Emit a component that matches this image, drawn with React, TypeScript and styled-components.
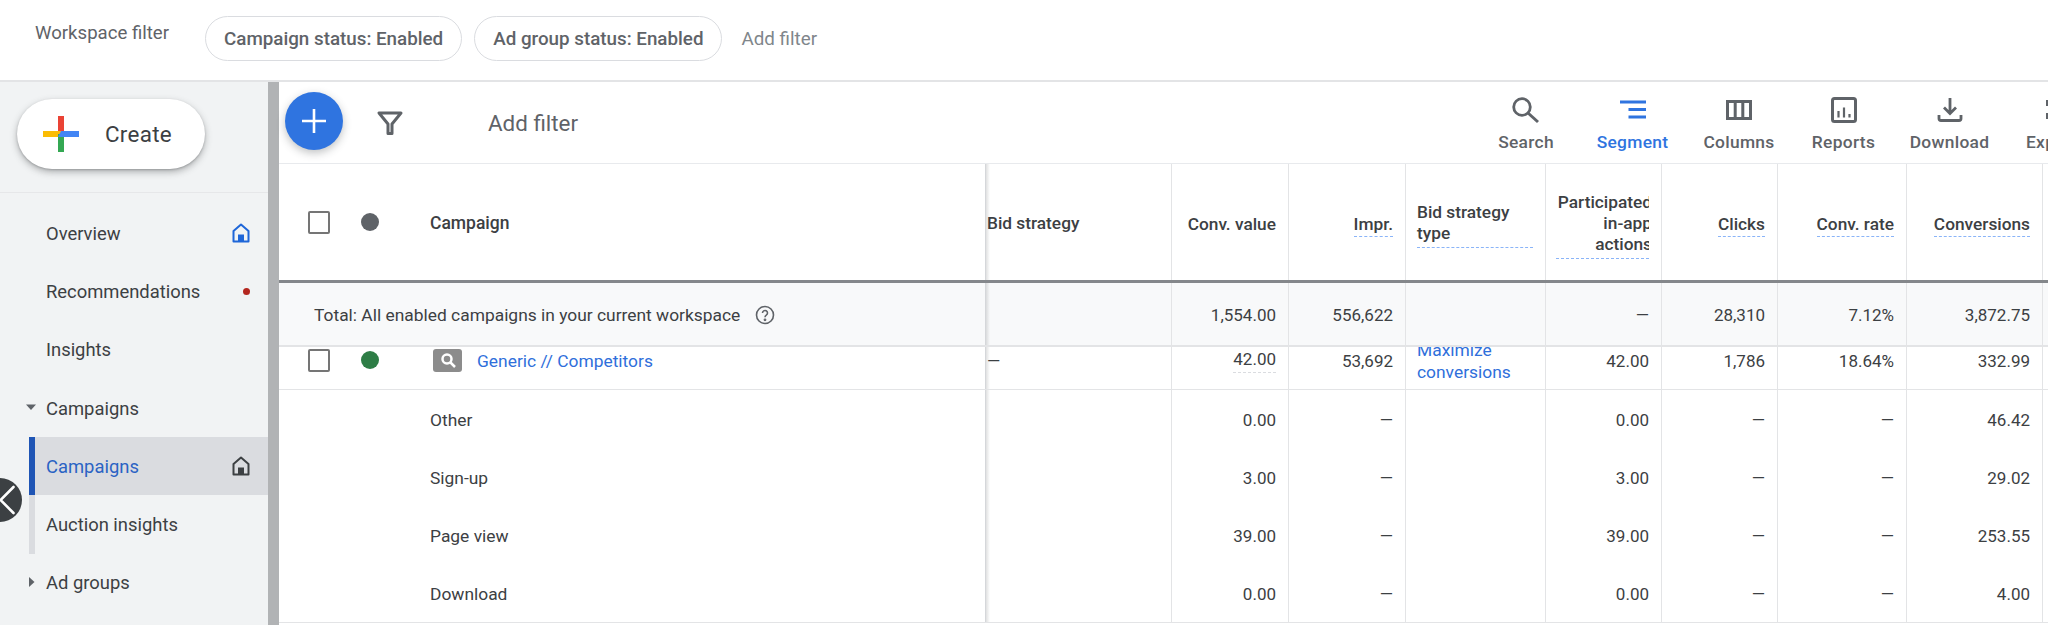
import * as React from 'react';
import styled, { createGlobalStyle } from 'styled-components';
import { ChevronLeft } from 'lucide-react';

const GlobalStyle = createGlobalStyle`
  html, body {
    margin: 0;
    padding: 0;
    background: #fff;
    overflow: hidden;
  }
  * {
    box-sizing: border-box;
  }
  body {
    font-family: Roboto, "Liberation Sans", sans-serif;
    color: #3c4043;
  }
`;

const COLUMNS = '707px 186px 117px 117px 140px 116px 116px 129px 136px 1fr';

const Page = styled.div`
  width: 2048px;
  height: 625px;
  overflow: hidden;
  position: relative;
  display: flex;
  flex-direction: column;
`;

const TopBar = styled.div`
  flex: 0 0 82px;
  display: flex;
  align-items: flex-start;
  padding: 16px 0 0 35px;
  border-bottom: 2px solid #e3e4e6;
`;

const WorkspaceLabel = styled.div`
  width: 170px;
  font-size: 18.6px;
  line-height: 20px;
  margin-top: 7px;
  color: #5f6368;
  white-space: nowrap;
`;

const Chip = styled.div`
  height: 45px;
  padding: 0 18px;
  margin-right: 12px;
  display: flex;
  align-items: center;
  border: 1px solid #dadce0;
  border-radius: 23px;
  font-size: 18.8px;
  font-weight: 500;
  color: #5f6368;
  white-space: nowrap;
`;

const AddFilterLink = styled.div`
  height: 45px;
  margin-left: 7px;
  display: flex;
  align-items: center;
  font-size: 18.8px;
  color: #80868b;
`;

const Body = styled.div`
  flex: 1;
  display: flex;
  min-height: 0;
`;

const Sidebar = styled.div`
  flex: 0 0 279px;
  background: #f1f3f4;
  border-right: 11px solid #b1b3b5;
  display: flex;
  flex-direction: column;
`;

const CreateArea = styled.div`
  flex: 0 0 111px;
  padding: 17px 0 0 17px;
  border-bottom: 1px solid #e6e7e9;
`;

const CreateButton = styled.div`
  width: 188px;
  height: 70px;
  border-radius: 35px;
  background: #fff;
  box-shadow: 0 3px 7px rgba(60, 64, 67, 0.38), 0 1px 2px rgba(60, 64, 67, 0.25);
  display: flex;
  align-items: center;
  padding-left: 26px;
  gap: 26px;
  font-size: 22.4px;
  letter-spacing: 0.3px;
  color: #3c4043;
`;

const NavList = styled.div`
  padding-top: 11px;
  display: flex;
  flex-direction: column;
`;

interface NavItemProps {
  $active?: boolean;
  $track?: boolean;
}

const NavItem = styled.div<NavItemProps>`
  height: 58.3px;
  display: flex;
  align-items: center;
  font-size: 18.4px;
  margin-left: ${p => (p.$active || p.$track ? '29px' : '0')};
  padding-left: ${p => (p.$active || p.$track ? '11px' : '46px')};
  padding-right: 18px;
  color: ${p => (p.$active ? '#2a63c4' : '#3c4043')};
  background: ${p => (p.$active ? '#dadce0' : 'transparent')};
  border-left: ${p => (p.$active ? '6px solid #1f55b5' : p.$track ? '6px solid #dadce0' : '0')};
  position: relative;
`;

const NavArrow = styled.svg`
  position: absolute;
  left: 26px;
  top: 50%;
  margin-top: -6px;
  width: 10px;
  height: 10px;
  fill: #5f6368;
`;

const NavEnd = styled.div`
  margin-left: auto;
  display: flex;
  align-items: center;
`;

const RedDot = styled.div`
  width: 7px;
  height: 7px;
  border-radius: 50%;
  background: #b3261e;
`;

const CollapseHandle = styled.div`
  position: absolute;
  left: -22px;
  top: 478px;
  width: 44px;
  height: 44px;
  border-radius: 50%;
  background: #3c4043;
  color: #fff;
  display: flex;
  align-items: center;
  padding-left: 3px;
  svg {
    flex: none;
  }
`;

const Main = styled.div`
  flex: 1;
  min-width: 0;
  display: flex;
  flex-direction: column;
`;

const Toolbar = styled.div`
  flex: 0 0 82px;
  display: flex;
  align-items: flex-start;
  border-bottom: 1px solid #e8eaed;
  position: relative;
`;

const Fab = styled.div`
  flex: 0 0 58px;
  height: 58px;
  margin: 10px 0 0 6px;
  border-radius: 50%;
  background: #2f74e0;
  box-shadow: 0 3px 9px rgba(60, 64, 67, 0.32);
  display: flex;
  align-items: center;
  justify-content: center;
`;

const FilterGlyph = styled.div`
  margin: 29px 0 0 33px;
  width: 28px;
  height: 28px;
`;

const ToolbarFilterText = styled.div`
  margin: 28px 0 0 84px;
  font-size: 22.4px;
  line-height: 26px;
  color: #5f6368;
`;

const ToolGroup = styled.div`
  margin-left: auto;
  display: flex;
  height: 100%;
`;

const Tool = styled.div<{ $active?: boolean; $width: number }>`
  width: ${p => p.$width}px;
  display: flex;
  flex-direction: column;
  align-items: center;
  padding-top: 13px;
  font-size: 17.4px;
  font-weight: 500;
  white-space: nowrap;
  color: ${p => (p.$active ? '#2f74e0' : '#5f6368')};
`;

const ExportTool = styled(Tool)`
  align-items: flex-start;
  padding-left: 22px;
`;

const ToolLabel = styled.div`
  margin-top: 7px;
  line-height: 20px;
  letter-spacing: 0.3px;
`;

const GridRow = styled.div<{ $height: number; $bg?: string; $bottom?: string }>`
  display: grid;
  grid-template-columns: ${COLUMNS};
  height: ${p => p.$height}px;
  background: ${p => p.$bg ?? 'transparent'};
  border-bottom: ${p => p.$bottom ?? '1px solid #e8eaed'};
`;

const Cell = styled.div<{ $left?: boolean }>`
  min-width: 0;
  display: flex;
  align-items: center;
  justify-content: ${p => (p.$left ? 'flex-start' : 'flex-end')};
  padding: ${p => (p.$left ? '2px 11px 0' : '2px 12px 0 0')};
  border-right: 1px solid #e3e4e6;
  font-size: 17px;
  color: #3c4043;
  overflow: hidden;
`;

const FrozenCell = styled(Cell)`
  justify-content: flex-start;
  padding: 2px 0 0;
  position: relative;
  z-index: 1;
  overflow: visible;
  border-right: 1px solid #d5d7da;
  &::after {
    content: '';
    position: absolute;
    top: 0;
    bottom: 0;
    right: -5px;
    width: 4px;
    background: linear-gradient(to right, rgba(60, 64, 67, 0.16), rgba(60, 64, 67, 0));
  }
`;

const StrategyCell = styled(Cell)`
  justify-content: flex-start;
  padding: 2px 0 0 1px;
`;

const HeaderCell = styled(Cell)`
  padding-top: 4px;
`;

const HeaderLabel = styled.div<{ $hint?: boolean; $left?: boolean }>`
  font-size: 17.3px;
  line-height: 21px;
  font-weight: 500;
  text-align: ${p => (p.$left ? 'left' : 'right')};
  color: #3c4043;
  white-space: nowrap;
  padding-bottom: 1px;
  margin-top: 2px;
  border-bottom: ${p => (p.$hint ? '1px dashed #8ab4f8' : '1px solid transparent')};
`;

const BidTypeLabel = styled(HeaderLabel)`
  width: 116px;
  padding-bottom: 3px;
`;

const ClippedLabel = styled(HeaderLabel)`
  width: 93px;
  padding-bottom: 3px;
  overflow: hidden;
  display: flex;
  flex-direction: column;
  align-items: flex-end;
  span {
    margin-right: -3px;
  }
`;

const Check = styled.div`
  flex: 0 0 22px;
  height: 23px;
  margin: -2px 0 0 29px;
  border: 2.5px solid #757575;
  border-radius: 2px;
  background: #fff;
`;

const StatusDot = styled.div<{ $color: string }>`
  flex: 0 0 18px;
  height: 18px;
  margin: -2px 0 0 31px;
  border-radius: 50%;
  background: ${p => p.$color};
`;

const CampaignHeading = styled.div`
  margin-left: 51px;
  font-size: 17.5px;
  font-weight: 500;
`;

const TotalText = styled.div`
  margin-left: 35px;
  display: flex;
  align-items: center;
  gap: 15px;
  font-size: 17.4px;
`;

const CampaignBadge = styled.div`
  flex: 0 0 29px;
  height: 23px;
  margin: -2px 0 0 54px;
  border-radius: 3px;
  background: #8c8c8c;
  display: flex;
  align-items: center;
  justify-content: center;
`;

const CampaignLink = styled.div`
  margin-left: 15px;
  color: #2f6fdb;
  font-size: 17.4px;
`;

const SegmentName = styled.div`
  margin-left: 151px;
  font-size: 17.4px;
`;

const HintValue = styled.span`
  border-bottom: 1px dashed #dadce0;
  padding-bottom: 3px;
`;

const ClippedRow = styled.div`
  height: 43px;
  overflow: hidden;
  border-bottom: 1px solid #e3e4e6;
`;

const RowShift = styled.div`
  margin-top: -16px;
`;

const BidLink = styled.div`
  color: #2f6fdb;
  font-size: 17.4px;
  line-height: 22px;
`;

const HomeIcon = ({ color, fill }: { color: string; fill: string }) => (
  <svg width="18" height="20" viewBox="0 0 18 20">
    <path d="M1.5 18.5V8L9 1.5 16.5 8v10.5z" fill={fill} stroke={color} strokeWidth="2" strokeLinejoin="round" />
    <rect x="6" y="11.5" width="6" height="7" fill={color} />
  </svg>
);

const GooglePlus = () => (
  <svg width="36" height="36" viewBox="0 0 36 36">
    <rect x="15" y="0" width="6" height="18" fill="#ea4335" />
    <rect x="0" y="15" width="18" height="6" fill="#fbbc04" />
    <rect x="15" y="18" width="6" height="18" fill="#34a853" />
    <path d="M15 21l3-6h18v6z" fill="#4285f4" />
  </svg>
);

const ToolIcon = ({ children }: { children: React.ReactNode }) => (
  <svg width="30" height="30" viewBox="0 0 30 30" fill="none" stroke="currentColor" strokeWidth="2.5">
    {children}
  </svg>
);

const tools = [
  {
    label: 'Search',
    width: 106,
    icon: (
      <ToolIcon>
        <circle cx="11" cy="12" r="8.3" strokeWidth="2.8" />
        <path d="M17 18l10 9" strokeWidth="3" />
      </ToolIcon>
    ),
  },
  {
    label: 'Segment',
    width: 107,
    active: true,
    icon: (
      <ToolIcon>
        <path d="M2 7h26M10.5 14.5H28M10.5 22H28" strokeWidth="3" />
      </ToolIcon>
    ),
  },
  {
    label: 'Columns',
    width: 106,
    icon: (
      <ToolIcon>
        <path d="M3.5 6.5h23v17h-23zM11.2 6.5v17M18.8 6.5v17" strokeWidth="3" />
      </ToolIcon>
    ),
  },
  {
    label: 'Reports',
    width: 103,
    icon: (
      <ToolIcon>
        <rect x="3.5" y="3.5" width="23" height="23" rx="2" strokeWidth="3" />
        <path d="M9.5 16v6.5M15 12.5v10M20.5 19v3.5" strokeWidth="2.2" />
      </ToolIcon>
    ),
  },
  {
    label: 'Download',
    width: 109,
    icon: (
      <ToolIcon>
        <path d="M15 3v15M9 12.5l6 6 6-6" strokeWidth="2.8" />
        <path d="M4 20v3.5a2 2 0 0 0 2 2h18a2 2 0 0 0 2-2V20" strokeWidth="2.8" />
      </ToolIcon>
    ),
  },
];

const rows = [
  { name: 'Other', value: '0.00', conversions: '46.42' },
  { name: 'Sign-up', value: '3.00', conversions: '29.02' },
  { name: 'Page view', value: '39.00', conversions: '253.55' },
  { name: 'Download', value: '0.00', conversions: '4.00' },
];

export default function App() {
  return (
    <Page>
      <GlobalStyle />
      <TopBar>
        <WorkspaceLabel>Workspace filter</WorkspaceLabel>
        <Chip>Campaign status: Enabled</Chip>
        <Chip>Ad group status: Enabled</Chip>
        <AddFilterLink>Add filter</AddFilterLink>
      </TopBar>
      <Body>
        <Sidebar>
          <CreateArea>
            <CreateButton>
              <GooglePlus />
              Create
            </CreateButton>
          </CreateArea>
          <NavList>
            <NavItem>
              Overview
              <NavEnd>
                <HomeIcon color="#1f66d8" fill="#f1f3f4" />
              </NavEnd>
            </NavItem>
            <NavItem>
              Recommendations
              <NavEnd>
                <RedDot />
              </NavEnd>
            </NavItem>
            <NavItem>Insights</NavItem>
            <NavItem>
              <NavArrow viewBox="0 0 10 10">
                <path d="M0 2.5h10L5 8z" />
              </NavArrow>
              Campaigns
            </NavItem>
            <NavItem $active>
              Campaigns
              <NavEnd>
                <HomeIcon color="#3c4043" fill="#dadce0" />
              </NavEnd>
            </NavItem>
            <NavItem $track>Auction insights</NavItem>
            <NavItem>
              <NavArrow viewBox="0 0 10 10">
                <path d="M3 0v10L8.5 5z" />
              </NavArrow>
              Ad groups
            </NavItem>
          </NavList>
        </Sidebar>
        <Main>
          <Toolbar>
            <Fab>
              <svg width="26" height="26" viewBox="0 0 26 26" stroke="#fff" strokeWidth="2.6">
                <path d="M13 1v24M1 13h24" />
              </svg>
            </Fab>
            <FilterGlyph>
              <svg width="28" height="28" viewBox="0 0 28 28" fill="none" stroke="#5f6368" strokeWidth="3">
                <path d="M3 2h22l-9 11v9.5h-4V13z" strokeLinejoin="round" />
              </svg>
            </FilterGlyph>
            <ToolbarFilterText>Add filter</ToolbarFilterText>
            <ToolGroup>
              {tools.map(t => (
                <Tool key={t.label} $active={t.active} $width={t.width}>
                  {t.icon}
                  <ToolLabel>{t.label}</ToolLabel>
                </Tool>
              ))}
              <ExportTool $width={44}>
                <svg width="30" height="30" viewBox="0 0 30 30" fill="currentColor">
                  <rect x="20" y="5" width="6" height="6" />
                  <rect x="20" y="18" width="6" height="6" />
                </svg>
                <ToolLabel>Export</ToolLabel>
              </ExportTool>
            </ToolGroup>
          </Toolbar>
          <GridRow $height={119} $bottom="3px solid #84878b">
            <FrozenCell>
              <Check />
              <StatusDot $color="#5f6368" />
              <CampaignHeading>Campaign</CampaignHeading>
            </FrozenCell>
            <StrategyCell>
              <HeaderLabel $left>Bid strategy</HeaderLabel>
            </StrategyCell>
            <HeaderCell>
              <HeaderLabel>Conv. value</HeaderLabel>
            </HeaderCell>
            <HeaderCell>
              <HeaderLabel $hint>Impr.</HeaderLabel>
            </HeaderCell>
            <HeaderCell $left>
              <BidTypeLabel $hint $left>
                Bid strategy
                <br />
                type
              </BidTypeLabel>
            </HeaderCell>
            <HeaderCell>
              <ClippedLabel $hint>
                <span>Participated</span>
                <span>in-app</span>
                <span>actions</span>
              </ClippedLabel>
            </HeaderCell>
            <HeaderCell>
              <HeaderLabel $hint>Clicks</HeaderLabel>
            </HeaderCell>
            <HeaderCell>
              <HeaderLabel $hint>Conv. rate</HeaderLabel>
            </HeaderCell>
            <HeaderCell>
              <HeaderLabel $hint>Conversions</HeaderLabel>
            </HeaderCell>
            <Cell />
          </GridRow>
          <GridRow $height={64} $bg="#f8f9fa" $bottom="2px solid #e3e4e6">
            <FrozenCell>
              <TotalText>
                Total: All enabled campaigns in your current workspace
                <svg width="20" height="20" viewBox="0 0 20 20" fill="none" stroke="#5f6368" strokeWidth="1.6">
                  <circle cx="10" cy="10" r="8.5" />
                  <path d="M7.5 8a2.5 2.5 0 1 1 3.8 2.1c-.9.6-1.3 1-1.3 2.2" />
                  <circle cx="10" cy="14.8" r=".6" />
                </svg>
              </TotalText>
            </FrozenCell>
            <Cell />
            <Cell>1,554.00</Cell>
            <Cell>556,622</Cell>
            <Cell />
            <Cell>—</Cell>
            <Cell>28,310</Cell>
            <Cell>7.12%</Cell>
            <Cell>3,872.75</Cell>
            <Cell />
          </GridRow>
          <ClippedRow>
            <RowShift>
              <GridRow $height={58} $bottom="0">
                <FrozenCell>
                  <Check />
                  <StatusDot $color="#2e7d46" />
                  <CampaignBadge>
                    <svg width="18" height="18" viewBox="0 0 18 18" fill="none" stroke="#fff" strokeWidth="2.5">
                      <circle cx="8" cy="8" r="4.5" />
                      <path d="M11 11l5 5" />
                    </svg>
                  </CampaignBadge>
                  <CampaignLink>Generic // Competitors</CampaignLink>
                </FrozenCell>
                <StrategyCell>—</StrategyCell>
                <Cell>
                  <HintValue>42.00</HintValue>
                </Cell>
                <Cell>53,692</Cell>
                <Cell $left>
                  <BidLink>
                    Maximize
                    <br />
                    conversions
                  </BidLink>
                </Cell>
                <Cell>42.00</Cell>
                <Cell>1,786</Cell>
                <Cell>18.64%</Cell>
                <Cell>332.99</Cell>
                <Cell />
              </GridRow>
            </RowShift>
          </ClippedRow>
          {rows.map((r, i) => (
            <GridRow key={r.name} $height={58.2} $bottom={i === rows.length - 1 ? '1px solid #e3e4e6' : '0'}>
              <FrozenCell>
                <SegmentName>{r.name}</SegmentName>
              </FrozenCell>
              <Cell />
              <Cell>{r.value}</Cell>
              <Cell>—</Cell>
              <Cell />
              <Cell>{r.value}</Cell>
              <Cell>—</Cell>
              <Cell>—</Cell>
              <Cell>{r.conversions}</Cell>
              <Cell />
            </GridRow>
          ))}
        </Main>
      </Body>
      <CollapseHandle>
        <ChevronLeft size={52} strokeWidth={1.2} />
      </CollapseHandle>
    </Page>
  );
}
